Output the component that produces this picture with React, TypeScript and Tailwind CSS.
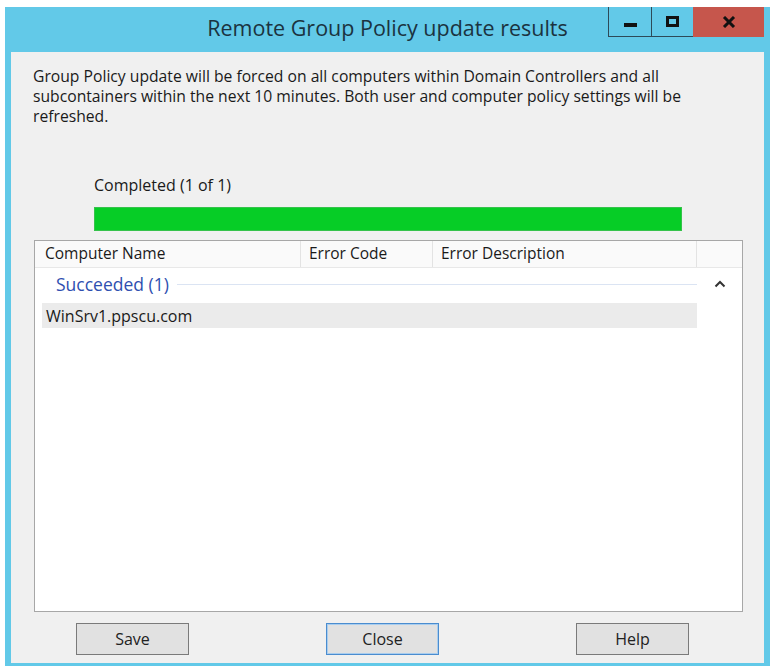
import React from "react";

const font = { fontFamily: '"Open Sans", "Noto Sans", sans-serif' };

function TitleButtons() {
  return (
    <div className="flex h-[30px] self-start">
      <div className="flex border-l border-b border-[#2d4a58]">
        <div className="w-[43px] h-full flex items-center justify-center border-r border-[#2d4a58]">
          <div className="w-[13px] h-[4px] bg-[#111] mt-[6px]" />
        </div>
        <div className="w-[41px] h-full flex items-center justify-center">
          <div className="w-[13px] h-[11px] border-[3px] border-[#111]" />
        </div>
      </div>
      <div className="w-[71px] h-full bg-[#c6564c] flex items-center justify-center">
        <svg width="14" height="12" viewBox="0 0 14 12">
          <path d="M2 1 L12 11 M12 1 L2 11" stroke="#111" strokeWidth="3" />
        </svg>
      </div>
    </div>
  );
}

function Btn({ label, focused }: { label: string; focused?: boolean }) {
  return (
    <button
      className={`w-[113px] h-[32px] bg-[#e1e1e1] text-[16px] text-[#222] border ${
        focused ? "border-[#4a8ccf] shadow-[inset_0_0_0_1px_#a9cdee]" : "border-[#7a7a7a]"
      }`}
    >
      {label}
    </button>
  );
}

export default function App() {
  return (
    <div className="w-[780px] h-[672px] bg-white pt-[7px] pl-[5px]" style={font}>
      <div className="w-[765px] h-[659px] bg-[#62c9e8] flex flex-col px-[6px] pb-[3px]">
        {/* Title bar */}
        <div className="h-[45px] flex relative">
          <div className="absolute left-[-6px] right-[-6px] top-0 h-[43px] flex items-center justify-center text-[21.5px] text-[#1b3340] pointer-events-none">
            Remote Group Policy update results
          </div>
          <div className="flex-1" />
          <TitleButtons />
        </div>

        {/* Client area */}
        <div className="flex-1 bg-[#f0f0f0] flex flex-col">
          <p className="pl-[22px] pr-[70px] pt-[14px] text-[15.7px] leading-[20px] text-[#1a1a1a]">
            Group Policy update will be forced on all computers within Domain Controllers and all
            subcontainers within the next 10 minutes. Both user and computer policy settings will be
            refreshed.
          </p>

          <div className="pl-[83px] mt-[49px] text-[16px] text-[#1a1a1a] leading-[20px]">
            Completed (1 of 1)
          </div>
          <div className="ml-[83px] mt-[12px] w-[588px] h-[24px] bg-[#06cd26] border border-[#35c24b]" />

          {/* List */}
          <div className="ml-[23px] mt-[9px] w-[709px] h-[372px] bg-white border border-[#a7a7a7] flex flex-col">
            <div className="h-[27px] flex bg-[#fafafa] border-b border-[#e8e8e8] text-[15.5px] text-[#1a1a1a]">
              <div className="w-[266px] pl-[10px] flex items-center border-r border-[#e3e3e3]">Computer Name</div>
              <div className="w-[132px] pl-[8px] flex items-center border-r border-[#e3e3e3]">Error Code</div>
              <div className="w-[264px] pl-[8px] flex items-center border-r border-[#e3e3e3]">Error Description</div>
              <div className="flex-1" />
            </div>
            <div className="h-[32px] flex items-center">
              <span className="pl-[21px] text-[17.5px] text-[#2f4fb0]">Succeeded (1)</span>
              <div className="flex-1 h-px bg-[#dbe4f3] ml-[8px]" />
              <div className="w-[45px] flex justify-center">
                <svg width="12" height="8" viewBox="0 0 12 8">
                  <path d="M1.5 6.5 L6 2 L10.5 6.5" fill="none" stroke="#333" strokeWidth="2" />
                </svg>
              </div>
            </div>
            <div className="mt-[3px] ml-[7px] w-[655px] h-[25px] bg-[#ebebeb] flex items-center pl-[4px] text-[16px] text-[#1a1a1a]">
              WinSrv1.ppscu.com
            </div>
          </div>

          {/* Buttons */}
          <div className="flex mt-[11px] pl-[65px] gap-[137px]">
            <Btn label="Save" />
            <Btn label="Close" focused />
            <Btn label="Help" />
          </div>
        </div>
      </div>
    </div>
  );
}
